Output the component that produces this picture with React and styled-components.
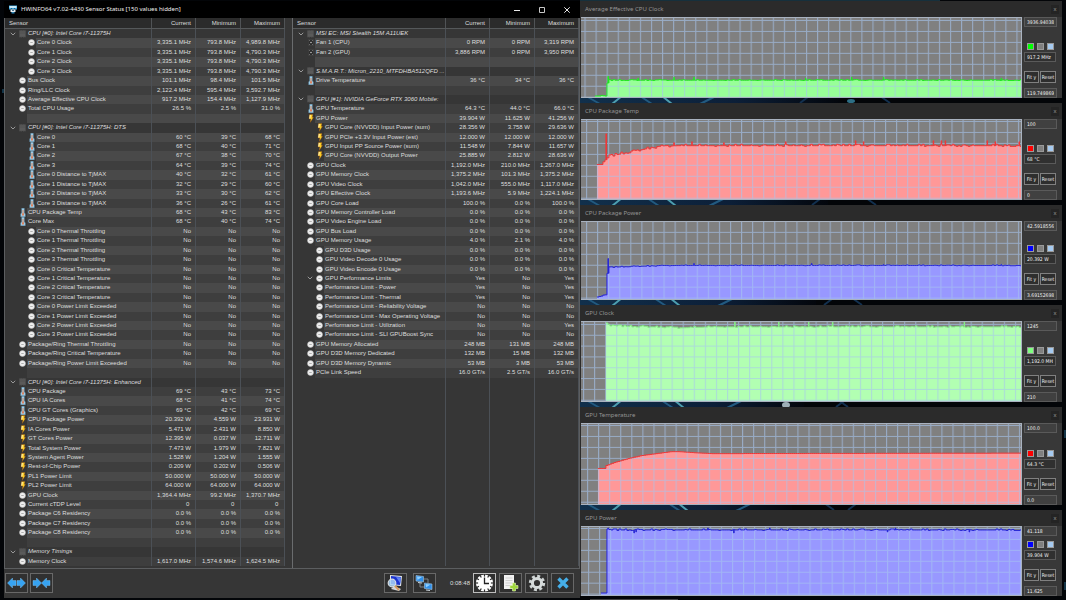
import React from "react";
import styled, { createGlobalStyle, css } from "styled-components";

const GlobalStyle = createGlobalStyle`
  * { box-sizing: border-box; }
  html, body, #root { height: 100%; }
  body {
    margin: 0;
    background: #000;
    color: #dedede;
    font: 6px/9px "Liberation Sans", Arial, sans-serif;
    overflow: hidden;
  }
  button, input { font: inherit; color: inherit; }
`;

/* ---------- desktop ---------- */

const Desktop = styled.div`
  position: relative;
  display: flex;
  height: 100%;
  min-height: 600px;
  padding: 1px 4px 0;
`;

const Wallpaper = styled.svg`
  position: absolute;
  inset: 0;
  width: 100%;
  height: 100%;
`;

/* ---------- sensor window ---------- */

const SensorWindow = styled.main`
  position: relative;
  display: flex;
  flex-direction: column;
  flex: 576 1 0;
  min-width: 0;
  margin-bottom: 2px;
  background: #363636;
`;

const TitleBar = styled.header`
  display: flex;
  align-items: center;
  height: 17px;
  padding: 0 1px 0 5px;
  gap: 4px;
  background: #000;
  color: #f0f0f0;
`;

const WindowTitle = styled.h1`
  flex: 1;
  margin: 0;
  font: 400 6px/9px "Noto Sans", sans-serif;
  white-space: nowrap;
`;

const CaptionButtons = styled.div`
  display: flex;
`;

const CaptionButton = styled.button`
  display: grid;
  place-items: center;
  width: 25px;
  height: 17px;
  padding: 0;
  border: 0;
  background: none;
`;

const Panes = styled.div`
  display: flex;
  flex: 1;
  min-height: 0;
  border: solid #5c5e60;
  border-width: 0 1px 1px;
`;

const Pane = styled.section`
  display: flex;
  flex: ${(p) => p.$grow} 1 0;
  min-width: 0;
  padding-bottom: 2px;
  padding-right: ${(p) => (p.$gutter ? "7px" : "0")};
  & + & { border-left: 1px solid #6a6c6e; }
`;

const SensorTable = styled.table`
  display: flex;
  flex-direction: column;
  flex: 1;
  min-width: 0;
`;

const rowColumns = css`
  display: grid;
  grid-template-columns: minmax(0, 1fr) 44px 45px 44px;
`;

const TableHead = styled.thead`
  display: block;
  background: #2b2b2b;
  border-bottom: 1px solid #55585a;
`;

const TableBody = styled.tbody`
  display: grid;
  flex: 1;
  grid-auto-rows: minmax(9px, 1fr);
`;

const HeadRow = styled.tr`
  ${rowColumns}
`;

const HeadCell = styled.th`
  padding: 0 4px;
  font-weight: 400;
  line-height: 10px;
  text-align: ${(p) => (p.$first ? "left" : "right")};
  border-right: 1px solid #505356;
`;

const rowShade = { group: "#363636", filler: "#363636", odd: "#494949", even: "#3e3e3e" };

const Row = styled.tr`
  ${rowColumns}
  --shade: ${(p) => rowShade[p.$tone]};
  font-style: ${(p) => (p.$tone === "group" ? "italic" : "normal")};
`;

const NameCell = styled.td`
  display: flex;
  padding: 0 0 0 ${(p) => (p.$nested ? "22px" : "13px")};
  border-right: 1px solid #4b5056;
  position: relative;
`;

const IconSlot = styled.span`
  display: grid;
  place-items: center;
  flex: none;
  width: 9px;
  height: 9px;
`;

const Name = styled.span`
  flex: 1;
  min-width: 0;
  padding-left: 1px;
  overflow: hidden;
  white-space: nowrap;
  background: var(--shade);
`;

const ValueCell = styled.td`
  padding: 0 4px 0 0;
  text-align: right;
  white-space: nowrap;
  background: var(--shade);
  border-right: 1px solid #4b5056;
`;

const Expander = styled.button`
  position: absolute;
  left: ${(p) => (p.$nested ? "13px" : "4px")};
  top: 0;
  display: grid;
  place-items: center;
  width: 7px;
  height: 9px;
  padding: 0;
  border: 0;
  background: none;
`;

/* ---------- toolbar ---------- */

const Toolbar = styled.footer`
  display: flex;
  align-items: flex-start;
  height: 29px;
  padding: 4px 6px 0 1px;
`;

const ToolGroup = styled.div`
  display: flex;
  align-items: center;
  gap: ${(p) => p.$gap}px;
  margin-left: ${(p) => (p.$end ? "auto" : p.$apart ? "3px" : "0")};
`;

const ToolButton = styled.button`
  display: grid;
  place-items: center;
  width: 23px;
  height: 20px;
  padding: 0;
  background: #303030;
  border: 1px solid ${(p) => (p.$active ? "#bdbdbd" : "#686868")};
`;

const Elapsed = styled.time`
  padding-left: 14px;
`;

/* ---------- graphs ---------- */

const GraphColumn = styled.aside`
  position: relative;
  display: flex;
  flex-direction: column;
  flex: 482 1 0;
  min-width: 0;
  gap: 5px;
  padding: 0 0 4px;
`;

const GraphWindow = styled.section`
  display: flex;
  flex-direction: column;
  flex: ${(p) => p.$grow} 1 0;
  min-height: 0;
  background: #383838;
  border-left: 1px solid #2b2b2b;
`;

const GraphTitleBar = styled.header`
  display: flex;
  align-items: center;
  justify-content: space-between;
  height: 16px;
  padding: 0 3px 0 4px;
  background: #2b2b2b;
  color: #949494;
`;

const GraphTitle = styled.h2`
  margin: 0;
  font: 400 6px/9px "Noto Sans", sans-serif;
`;

const GraphClose = styled.button`
  width: 8px;
  height: 9px;
  padding: 0;
  border: 0;
  background: #242424;
  color: #9a9a9a;
  line-height: 8px;
`;

const GraphBody = styled.div`
  display: flex;
  flex: 1;
  min-height: 0;
`;

const Plot = styled.svg`
  flex: 1;
  min-width: 0;
  width: 0;
  height: 100%;
  background: #808080;
  border: solid #a9b2bf;
  border-width: 1px 1px 1px 0;
`;

const Controls = styled.div`
  display: flex;
  flex-direction: column;
  align-items: flex-start;
  width: 40px;
  padding-left: 2px;
  font: 5px/7px "DejaVu Sans Condensed", "DejaVu Sans", sans-serif;
  color: #f0f0f0;
`;

const Field = styled.input`
  width: ${(p) => (p.$wide ? "33px" : "32px")};
  height: 10px;
  padding: 0 2px;
  border: 1px solid #5a5a5a;
  background: ${(p) => (p.$wide ? "#404040" : "#303030")};
  border-radius: 0;
`;

const Swatches = styled.div`
  display: flex;
  gap: 3px;
  margin: auto 0 2px;
  padding-left: 3px;
`;

const Swatch = styled.button`
  width: 7px;
  height: 7px;
  padding: 0;
  border: 1px solid #9a9a9a;
  background: ${(p) => p.$color};
`;

const ButtonPair = styled.div`
  display: flex;
  justify-content: space-between;
  width: 32px;
  margin: 9px 0 5px;
`;

const SmallButton = styled.button`
  height: 12px;
  width: ${(p) => p.$width}px;
  padding: 0;
  border: 1px solid #808080;
  background: #2e2e2e;
  white-space: nowrap;
`;

/* ---------- icons ---------- */

const DialIcon = () => (
  <svg width="7" height="7" viewBox="0 0 14 14" aria-hidden="true">
    <circle cx="7" cy="7" r="6" fill="#efefef" stroke="#b4b4b4" strokeWidth="1" />
    <path d="M4.500 7h5" stroke="#a8a8a8" strokeWidth="1.800" />
  </svg>
);

const TempIcon = () => (
  <svg width="6" height="9" viewBox="0 0 12 18" aria-hidden="true">
    <path d="M3.500 .5h5V10l2 1.500v6h-9v-6l2-1.500z" fill="#a9d3ea" stroke="#5f94b6" strokeWidth="1" />
    <path d="M6 4v8" stroke="#e07848" strokeWidth="1.600" />
    <path d="M4.500 11h3v4h-3z" fill="#ea6630" />
  </svg>
);

const BoltIcon = () => (
  <svg width="6" height="9" viewBox="0 0 12 18" aria-hidden="true">
    <path d="M3 1h7L8.500 6.500H11L4.500 17l1-7H2z" fill="#ffd028" stroke="#8a4a14" strokeWidth=".8" />
    <path d="M4.500 2L3.500 9" stroke="#fff7cf" strokeWidth="1.800" />
  </svg>
);

const FanIcon = () => (
  <svg width="6" height="7" viewBox="0 0 12 14" aria-hidden="true">
    <rect x=".5" y="1.500" width="11" height="11" fill="#2b2b2b" stroke="#4a4a4a" />
    <path d="M2 3h2M8 3h2M2 11h2M8 11h2" stroke="#8c8c8c" strokeWidth="1.300" />
    <circle cx="6" cy="7" r="1.500" fill="#d0d0d0" />
  </svg>
);

const ChipIcon = () => (
  <svg width="7" height="8" viewBox="0 0 14 16" aria-hidden="true">
    <path d="M2 1v14M5 1v14M9 1v14M12 1v14" stroke="#686868" strokeWidth="1" />
    <rect x="1" y="1" width="12" height="13" fill="#555" />
    <path d="M2 10h10" stroke="#6a6a6a" strokeWidth="1" />
  </svg>
);

const ChevronIcon = () => (
  <svg width="6" height="4" viewBox="0 0 12 8" aria-hidden="true">
    <path d="M1.500 1.500L6 6l4.500-4.500" fill="none" stroke="#a4a4a4" strokeWidth="1.800" />
  </svg>
);

const icons = { dial: DialIcon, temp: TempIcon, bolt: BoltIcon, fan: FanIcon, chip: ChipIcon };

const AppIcon = () => (
  <svg width="8" height="9" viewBox="0 0 16 18" aria-hidden="true">
    <path d="M0 1h16v8H0z" fill="#3aa4dc" />
    <path d="M1 2h14v4H1z" fill="#c9ecfb" />
    <path d="M3 9h10v5H3z" fill="#e8eef2" />
    <path d="M5 14h6v3H5z" fill="#2f86b8" />
    <path d="M4 7h2M10 7h2M6 11h4" stroke="#134a6c" strokeWidth="1.500" />
  </svg>
);

const Arrow = ({ x, flip }) => (
  <path
    d={flip ? `M${x + 8.5} 4.500v5h-3.500v2.500L${x} 7l5-5v2.500z` : `M${x} 4.500h3.500V2l5 5-5 5V9.500H${x}z`}
    fill="#36a3f2"
    stroke="#86c6f6"
    strokeWidth=".4"
  />
);

const ExpandIcon = () => (
  <svg width="19" height="14" viewBox="0 0 19 14" aria-hidden="true">
    <Arrow x={0.5} flip />
    <Arrow x={10} />
  </svg>
);

const CollapseIcon = () => (
  <svg width="19" height="14" viewBox="0 0 19 14" aria-hidden="true">
    <Arrow x={1} />
    <Arrow x={9.500} flip />
  </svg>
);

const InspectIcon = () => (
  <svg width="18" height="18" viewBox="0 0 18 18" aria-hidden="true">
    <path d="M4 1l12 1-1 10-11-1z" fill="#e2e6ea" />
    <path d="M5 2l10 1-1 8-9-1z" fill="#1c34cf" />
    <path d="M10 3l5 .5-.7 6z" fill="#5f82f2" />
    <path d="M8 12l7 3-2 2-8-2z" fill="#d3d6da" />
    <circle cx="6" cy="9" r="3.800" fill="#a9d2f4" fillOpacity=".85" stroke="#d7dde2" strokeWidth="1.200" />
    <path d="M9 12l4 4" stroke="#d69a5c" strokeWidth="1.800" />
  </svg>
);

const NetworkIcon = () => (
  <svg width="18" height="18" viewBox="0 0 18 18" aria-hidden="true">
    <path d="M5 9v4h4M9 5h4v4" fill="none" stroke="#7c848a" strokeWidth="1" />
    <path d="M1 1.500l7.500 1v5.500l-7.500-1z" fill="#2f8fea" stroke="#a9c7dd" strokeWidth=".6" />
    <path d="M2 2.500l5 .6L2.500 6z" fill="#8fd0ff" />
    <path d="M3 8l4 .5v1L3 9z" fill="#c9d2d8" />
    <path d="M9.500 9l7.500 1v5.500l-7.500-1z" fill="#2f8fea" stroke="#a9c7dd" strokeWidth=".6" />
    <path d="M10.500 10l5 .6-4.500 3z" fill="#8fd0ff" />
    <path d="M11 15.500l4 .5v1l-4-.5z" fill="#c9d2d8" />
  </svg>
);

const clockTicks = Array.from({ length: 12 }, (_, i) => i * 30);

const ClockIcon = () => (
  <svg width="19" height="18" viewBox="0 0 19 18" aria-hidden="true">
    <circle cx="9.500" cy="9" r="8.600" fill="#fff" />
    {clockTicks.map((angle) => (
      <path key={angle} d="M9.500 0v2.600" stroke="#2c2c2c" strokeWidth="1.200" transform={`rotate(${angle} 9.500 9)`} />
    ))}
    <path d="M9.500 3.500V9.500H14" fill="none" stroke="#222" strokeWidth="1.300" />
  </svg>
);

const LogIcon = () => (
  <svg width="17" height="18" viewBox="0 0 17 18" aria-hidden="true">
    <path d="M2 1h10v14H2z" fill="#f1f1f1" />
    <path d="M3.500 4h7M3.500 6.500h7M3.500 9h7M3.500 11.500h5" stroke="#cfcfcf" strokeWidth="1" />
    <path d="M10.500 9h3v2.500H16v3h-2.500V17h-3v-2.500H8v-3h2.500z" fill="#9fd63c" stroke="#dff3b4" strokeWidth=".6" />
  </svg>
);

const GearIcon = () => (
  <svg width="18" height="18" viewBox="0 0 18 18" aria-hidden="true">
    <circle cx="9" cy="9" r="6.700" fill="none" stroke="#cfd4d4" strokeWidth="3" strokeDasharray="2.900 2.360" />
    <circle cx="9" cy="9" r="4.600" fill="none" stroke="#d5dada" strokeWidth="3" />
  </svg>
);

const CrossIcon = () => (
  <svg width="14" height="14" viewBox="0 0 14 14" aria-hidden="true">
    <path d="M2.500 2.500l9 9M11.500 2.500l-9 9" stroke="#45aee8" strokeWidth="3.400" />
  </svg>
);

/* ---------- sensor data ---------- */

const group = (name) => ({ kind: "group", icon: "chip", name, values: ["", "", ""] });
const sensor = (icon, name, ...values) => ({ kind: "sensor", icon, name, values });
const child = (icon, name, ...values) => ({ kind: "sensor", nested: true, icon, name, values });
const blank = { kind: "blank", name: "", values: ["", "", ""] };
const cores = [0, 1, 2, 3];
const no = ["No", "No", "No"];

const leftSensors = [
  group("CPU [#0]: Intel Core i7-11375H"),
  child("dial", "Core 0 Clock", "3,335.1 MHz", "793.8 MHz", "4,989.8 MHz"),
  child("dial", "Core 1 Clock", "3,335.1 MHz", "793.8 MHz", "4,790.3 MHz"),
  child("dial", "Core 2 Clock", "3,335.1 MHz", "793.8 MHz", "4,790.3 MHz"),
  child("dial", "Core 3 Clock", "3,335.1 MHz", "793.8 MHz", "4,790.3 MHz"),
  sensor("dial", "Bus Clock", "101.1 MHz", "98.4 MHz", "101.5 MHz"),
  sensor("dial", "Ring/LLC Clock", "2,122.4 MHz", "595.4 MHz", "3,592.7 MHz"),
  sensor("dial", "Average Effective CPU Clock", "917.2 MHz", "154.4 MHz", "1,127.9 MHz"),
  sensor("dial", "Total CPU Usage", "26.5 %", "2.5 %", "31.0 %"),
  blank,
  group("CPU [#0]: Intel Core i7-11375H: DTS"),
  child("temp", "Core 0", "60 °C", "39 °C", "68 °C"),
  child("temp", "Core 1", "68 °C", "40 °C", "71 °C"),
  child("temp", "Core 2", "67 °C", "38 °C", "70 °C"),
  child("temp", "Core 3", "64 °C", "39 °C", "74 °C"),
  child("temp", "Core 0 Distance to TjMAX", "40 °C", "32 °C", "61 °C"),
  child("temp", "Core 1 Distance to TjMAX", "32 °C", "29 °C", "60 °C"),
  child("temp", "Core 2 Distance to TjMAX", "33 °C", "30 °C", "62 °C"),
  child("temp", "Core 3 Distance to TjMAX", "36 °C", "26 °C", "61 °C"),
  sensor("temp", "CPU Package Temp", "68 °C", "43 °C", "83 °C"),
  sensor("temp", "Core Max", "68 °C", "40 °C", "74 °C"),
  ...cores.map((n) => child("dial", `Core ${n} Thermal Throttling`, ...no)),
  ...cores.map((n) => child("dial", `Core ${n} Critical Temperature`, ...no)),
  ...cores.map((n) => child("dial", `Core ${n} Power Limit Exceeded`, ...no)),
  sensor("dial", "Package/Ring Thermal Throttling", ...no),
  sensor("dial", "Package/Ring Critical Temperature", ...no),
  sensor("dial", "Package/Ring Power Limit Exceeded", ...no),
  blank,
  group("CPU [#0]: Intel Core i7-11375H: Enhanced"),
  sensor("temp", "CPU Package", "69 °C", "43 °C", "73 °C"),
  sensor("temp", "CPU IA Cores", "68 °C", "41 °C", "74 °C"),
  sensor("temp", "CPU GT Cores (Graphics)", "69 °C", "42 °C", "69 °C"),
  sensor("bolt", "CPU Package Power", "20.392 W", "4.559 W", "23.931 W"),
  sensor("bolt", "IA Cores Power", "5.471 W", "2.431 W", "8.850 W"),
  sensor("bolt", "GT Cores Power", "12.395 W", "0.037 W", "12.711 W"),
  sensor("bolt", "Total System Power", "7.473 W", "1.979 W", "7.821 W"),
  sensor("bolt", "System Agent Power", "1.528 W", "1.204 W", "1.555 W"),
  sensor("bolt", "Rest-of-Chip Power", "0.209 W", "0.202 W", "0.506 W"),
  sensor("bolt", "PL1 Power Limit", "50.000 W", "50.000 W", "50.000 W"),
  sensor("bolt", "PL2 Power Limit", "64.000 W", "64.000 W", "64.000 W"),
  sensor("dial", "GPU Clock", "1,364.4 MHz", "99.2 MHz", "1,370.7 MHz"),
  sensor("dial", "Current cTDP Level", "0\u00a0", "0\u00a0", "0\u00a0"),
  sensor("dial", "Package C6 Residency", "0.0 %", "0.0 %", "0.0 %"),
  sensor("dial", "Package C7 Residency", "0.0 %", "0.0 %", "0.0 %"),
  sensor("dial", "Package C8 Residency", "0.0 %", "0.0 %", "0.0 %"),
  blank,
  group("Memory Timings"),
  sensor("dial", "Memory Clock", "1,617.0 MHz", "1,574.6 MHz", "1,624.5 MHz"),
];

const rightSensors = [
  group("MSI EC: MSI Stealth 15M A11UEK"),
  sensor("fan", "Fan 1 (CPU)", "0 RPM", "0 RPM", "3,319 RPM"),
  sensor("fan", "Fan 2 (GPU)", "3,886 RPM", "0 RPM", "3,950 RPM"),
  blank,
  group("S.M.A.R.T.: Micron_2210_MTFDHBA512QFD ..."),
  sensor("temp", "Drive Temperature", "36 °C", "34 °C", "36 °C"),
  blank,
  group("GPU [#1]: NVIDIA GeForce RTX 3060 Mobile:"),
  sensor("temp", "GPU Temperature", "64.3 °C", "44.0 °C", "66.0 °C"),
  sensor("bolt", "GPU Power", "39.904 W", "11.625 W", "41.256 W"),
  child("bolt", "GPU Core (NVVDD) Input Power (sum)", "28.356 W", "3.758 W", "29.636 W"),
  child("bolt", "GPU PCIe +3.3V Input Power (est)", "12.000 W", "12.000 W", "12.000 W"),
  child("bolt", "GPU Input PP Source Power (sum)", "11.548 W", "7.844 W", "11.657 W"),
  child("bolt", "GPU Core (NVVDD) Output Power", "25.885 W", "2.812 W", "28.636 W"),
  sensor("dial", "GPU Clock", "1,192.0 MHz", "210.0 MHz", "1,267.0 MHz"),
  sensor("dial", "GPU Memory Clock", "1,375.2 MHz", "101.3 MHz", "1,375.2 MHz"),
  sensor("dial", "GPU Video Clock", "1,042.0 MHz", "555.0 MHz", "1,117.0 MHz"),
  sensor("dial", "GPU Effective Clock", "1,193.6 MHz", "5.9 MHz", "1,224.1 MHz"),
  sensor("dial", "GPU Core Load", "100.0 %", "0.0 %", "100.0 %"),
  sensor("dial", "GPU Memory Controller Load", "0.0 %", "0.0 %", "0.0 %"),
  sensor("dial", "GPU Video Engine Load", "0.0 %", "0.0 %", "0.0 %"),
  sensor("dial", "GPU Bus Load", "0.0 %", "0.0 %", "0.0 %"),
  sensor("dial", "GPU Memory Usage", "4.0 %", "2.1 %", "4.0 %"),
  child("dial", "GPU D3D Usage", "0.0 %", "0.0 %", "0.0 %"),
  child("dial", "GPU Video Decode 0 Usage", "0.0 %", "0.0 %", "0.0 %"),
  child("dial", "GPU Video Encode 0 Usage", "0.0 %", "0.0 %", "0.0 %"),
  { ...child("dial", "GPU Performance Limits", "Yes", "No", "Yes"), expands: true },
  child("dial", "Performance Limit - Power", "Yes", "No", "Yes"),
  child("dial", "Performance Limit - Thermal", "Yes", "No", "Yes"),
  child("dial", "Performance Limit - Reliability Voltage", ...no),
  child("dial", "Performance Limit - Max Operating Voltage", ...no),
  child("dial", "Performance Limit - Utilization", "No", "No", "Yes"),
  child("dial", "Performance Limit - SLI GPUBoost Sync", ...no),
  sensor("dial", "GPU Memory Allocated", "248 MB", "131 MB", "248 MB"),
  sensor("dial", "GPU D3D Memory Dedicated", "132 MB", "15 MB", "132 MB"),
  sensor("dial", "GPU D3D Memory Dynamic", "53 MB", "3 MB", "53 MB"),
  sensor("dial", "PCIe Link Speed", "16.0 GT/s", "2.5 GT/s", "16.0 GT/s"),
];

const rowSlots = leftSensors.length;

/* ---------- graph data ---------- */

const graphs = [
  {
    title: "Average Effective CPU Clock", top: "3936.940386", bottom: "119.7498693", value: "917.2 MHz",
    grow: 97, height: 80, grid: [3.5, 2], color: "#00ff00", line: "#1fe81f", fill: "#98ff98",
    keys: [[14, 79], [24, 79], [25, 70], [27, 63], [441, 63]], noise: 0.6,
    spikes: { 27: 59, 57: 61, 92: 60, 112: 60, 224: 61, 270: 60, 303: 60, 420: 61 },
  },
  {
    title: "CPU Package Temp", top: "100", bottom: "0", value: "68 °C",
    grow: 97, height: 80, grid: [5, 1], color: "#ff0000", line: "#f03434", fill: "#ff9898",
    keys: [[16, 45], [21, 45], [27, 37], [40, 34], [56, 31], [65, 29], [80, 27], [95, 26], [441, 26]], noise: 1.4,
    spikes: { 25: 14, 93: 23, 111: 22, 143: 23, 205: 22, 275: 21, 283: 22, 352: 21, 361: 21, 364: 21, 407: 21, 415: 22, 438: 22 },
  },
  {
    title: "CPU Package Power", top: "42.5918556594", bottom: "3.6915269851", value: "20.392 W",
    grow: 95, height: 78, grid: [5, 10], color: "#0000ff", line: "#2424d8", fill: "#9898ff",
    keys: [[16, 76], [24, 74], [25, 58], [27, 46], [50, 45], [95, 44], [441, 44]], noise: 0.5,
    spikes: { 27: 37, 112: 42, 230: 42, 303: 43, 420: 43 },
  },
  {
    title: "GPU Clock", top: "1245", bottom: "210", value: "1,192.0 MHz",
    grow: 97, height: 81, grid: [2, 2], color: "#80ff80", line: "#84ec84", fill: "#b2ffb2",
    keys: [[25, 1], [29, 4], [70, 5], [100, 6], [130, 5], [441, 5]], noise: 1,
    spikes: { 154: 0, 197: 0, 228: 0, 252: 0, 383: 0 },
  },
  {
    title: "GPU Temperature", top: "100.0", bottom: "0.0", value: "64.3 °C",
    grow: 98, height: 81, grid: [6, 1], color: "#ff0000", line: "#f03434", fill: "#ff9898",
    keys: [[17, 45], [24, 45], [25, 42], [33, 39], [47, 35], [60, 32], [75, 30], [90, 28], [98, 28], [112, 29], [130, 30], [441, 29.5]], noise: 0,
    spikes: {},
  },
  {
    title: "GPU Power", top: "41.118", bottom: "11.625", value: "39.904 W",
    grow: 86, height: 69, grid: [7, 1], color: "#0000ff", line: "#2424d8", fill: "#9898ff",
    keys: [[20, 67], [24, 67], [25, 3], [30, 3], [441, 3]], noise: 1,
    spikes: { 27: 1, 52: 6, 54: 5, 127: 1, 153: 6, 188: 1, 315: 1, 306: 5, 388: 5 },
  },
];

function interpolate(keys, x) {
  for (let i = 1; i < keys.length; i += 1) {
    const [x0, y0] = keys[i - 1];
    const [x1, y1] = keys[i];
    if (x <= x1) return y0 + ((y1 - y0) * (x - x0)) / (x1 - x0);
  }
  return keys[keys.length - 1][1];
}

function tracePath({ keys, noise, spikes }) {
  const marks = Object.entries(spikes).map(([x, y]) => [Number(x), y]);
  let seed = 7;
  let path = "";
  for (let x = keys[0][0]; x < 441; x += 2) {
    seed = (seed * 1103515245 + 12345) % 2147483648;
    const r = seed / 2147483648;
    const wobble = r > 0.84 ? -noise : r > 0.66 ? -noise / 2 : r < 0.1 ? noise / 2 : 0;
    const mark = marks.find(([mx]) => mx >= x && mx < x + 2);
    const level = (interpolate(keys, x) + wobble).toFixed(1);
    path += `${path ? "V" : `M${x} `}${level}`;
    path += mark ? `h1V${mark[1]}h.5V${level}h.5` : "h2";
  }
  return path;
}

/* ---------- components ---------- */

function Sensors({ label, rows }) {
  const filler = Array.from({ length: rowSlots - rows.length }, () => ({ ...blank, kind: "filler" }));
  return (
    <SensorTable aria-label={label}>
      <TableHead>
        <HeadRow>
          <HeadCell $first>Sensor</HeadCell>
          <HeadCell>Current</HeadCell>
          <HeadCell>Minimum</HeadCell>
          <HeadCell>Maximum</HeadCell>
        </HeadRow>
      </TableHead>
      <TableBody>
        {[...rows, ...filler].map((row, i) => {
          const Icon = icons[row.icon];
          const tone = row.kind === "group" || row.kind === "filler" ? row.kind : i % 2 ? "odd" : "even";
          return (
            <Row key={i} $tone={tone}>
              <NameCell $nested={row.nested}>
                {(row.kind === "group" || row.expands) && (
                  <Expander $nested={row.nested} aria-label={`Collapse ${row.name}`}>
                    <ChevronIcon />
                  </Expander>
                )}
                <IconSlot>{Icon && <Icon />}</IconSlot>
                <Name>{row.name}</Name>
              </NameCell>
              {row.values.map((value, j) => (
                <ValueCell key={j}>{value}</ValueCell>
              ))}
            </Row>
          );
        })}
      </TableBody>
    </SensorTable>
  );
}

function Graph({ graph, id }) {
  const { title, top, bottom, value, grow, height, grid, color, line, fill } = graph;
  const trace = tracePath(graph);
  return (
    <GraphWindow $grow={grow}>
      <GraphTitleBar>
        <GraphTitle>{title}</GraphTitle>
        <GraphClose aria-label={`Close ${title}`}>x</GraphClose>
      </GraphTitleBar>
      <GraphBody>
        <Plot viewBox={`0 0 441 ${height}`} preserveAspectRatio="none" role="img" aria-label={title}>
          <defs>
            <pattern id={id} x={grid[0]} y={grid[1]} width="11.1" height="11.1" patternUnits="userSpaceOnUse">
              <path d="M0 .5H11.1M.5 0V11.100" stroke="#a6c4ee" strokeOpacity=".62" strokeWidth="1.200" />
            </pattern>
          </defs>
          <path d={`${trace}V${height}H${graph.keys[0][0]}Z`} fill={fill} />
          <rect width="441" height={height} fill={`url(#${id})`} />
          <path d={trace} fill="none" stroke={line} strokeWidth="1" />
        </Plot>
        <Controls>
          <Field $wide aria-label={`${title} upper bound`} defaultValue={top} />
          <Swatches>
            <Swatch $color={color} aria-label="Line colour" />
            <Swatch $color="#808080" aria-label="Background colour" />
            <Swatch $color="#a6caf0" aria-label="Grid colour" />
          </Swatches>
          <Field readOnly aria-label={`${title} value`} value={value} />
          <ButtonPair>
            <SmallButton $width={15}>Fit y</SmallButton>
            <SmallButton $width={16}>Reset</SmallButton>
          </ButtonPair>
          <Field $wide aria-label={`${title} lower bound`} defaultValue={bottom} />
        </Controls>
      </GraphBody>
    </GraphWindow>
  );
}

const gapRows = [100, 202, 302, 404, 507];

export default function App() {
  return (
    <Desktop>
      <GlobalStyle />
      <Wallpaper viewBox="0 0 1066 600" preserveAspectRatio="none" aria-hidden="true">
        <defs>
          <linearGradient id="glow">
            <stop offset="0" stopColor="#11304c" />
            <stop offset=".6" stopColor="#0c1f38" />
            <stop offset="1" stopColor="#03060c" />
          </linearGradient>
        </defs>
        <rect width="1066" height="600" fill="#030508" />
        {gapRows.map((y, i) => (
          <g key={y} fill="none" strokeWidth="2">
            <rect x="580" y={y - 4} width={260 - i * 12} height="9" fill="url(#glow)" />
            <path d={`M586 ${y - 4}l14 8M${640 + i * 7} ${y - 4}l12 8M${700 + i * 9} ${y + 4}l16-8`} stroke="#225a80" />
            <path d={`M612 ${y + 4}l10-8M${662 + i * 4} ${y - 4}l10 8`} stroke="#4d9fb0" />
            <path d={`M${800 + i * 12} ${y + 3}l8-6M${880 - i * 14} ${y - 4}l10 7`} stroke="#12304f" />
          </g>
        ))}
        <ellipse cx="851" cy="101" rx="4" ry="2" fill="#2d6f86" />
        <ellipse cx="786" cy="405" rx="4" ry="3" fill="#9fb0b8" />
        <path d="M1065 430v8M1065 582v8M3 89v4" stroke="#143548" strokeWidth="2" />
        <path d="M580 0H940" stroke="#16303c" strokeWidth="2" />
        <path d="M590 599.500h88" stroke="#444" />
      </Wallpaper>

      <SensorWindow>
        <TitleBar>
          <AppIcon />
          <WindowTitle>HWiNFO64 v7.02-4430 Sensor Status [150 values hidden]</WindowTitle>
          <CaptionButtons>
            <CaptionButton aria-label="Minimize">
              <svg width="6" height="6" viewBox="0 0 6 6"><path d="M0 3.500h6" stroke="#e8e8e8" /></svg>
            </CaptionButton>
            <CaptionButton aria-label="Maximize">
              <svg width="6" height="6" viewBox="0 0 6 6"><path d="M.5 .5h5v5h-5z" fill="none" stroke="#c8c8c8" /></svg>
            </CaptionButton>
            <CaptionButton aria-label="Close">
              <svg width="6" height="6" viewBox="0 0 6 6"><path d="M.3 .3l5.400 5.400M5.700 .3L.3 5.700" stroke="#e8e8e8" /></svg>
            </CaptionButton>
          </CaptionButtons>
        </TitleBar>
        <Panes>
          <Pane $grow={280} $gutter>
            <Sensors label="CPU and memory sensors" rows={leftSensors} />
          </Pane>
          <Pane $grow={286}>
            <Sensors label="Board, drive and GPU sensors" rows={rightSensors} />
          </Pane>
        </Panes>
        <Toolbar>
          <ToolGroup $gap={2}>
            <ToolButton aria-label="Expand columns"><ExpandIcon /></ToolButton>
            <ToolButton aria-label="Collapse columns"><CollapseIcon /></ToolButton>
          </ToolGroup>
          <ToolGroup $gap={6} $end>
            <ToolButton aria-label="System summary"><InspectIcon /></ToolButton>
            <ToolButton aria-label="Remote monitoring"><NetworkIcon /></ToolButton>
          </ToolGroup>
          <ToolGroup $gap={3}>
            <Elapsed>0:08:48</Elapsed>
            <ToolButton $active aria-label="Reset clock"><ClockIcon /></ToolButton>
          </ToolGroup>
          <ToolGroup $gap={3} $apart>
            <ToolButton aria-label="Start logging"><LogIcon /></ToolButton>
            <ToolButton aria-label="Settings"><GearIcon /></ToolButton>
            <ToolButton aria-label="Close sensors"><CrossIcon /></ToolButton>
          </ToolGroup>
        </Toolbar>
      </SensorWindow>

      <GraphColumn>
        {graphs.map((graph, i) => (
          <Graph key={graph.title} graph={graph} id={`grid-${i}`} />
        ))}
      </GraphColumn>
    </Desktop>
  );
}
